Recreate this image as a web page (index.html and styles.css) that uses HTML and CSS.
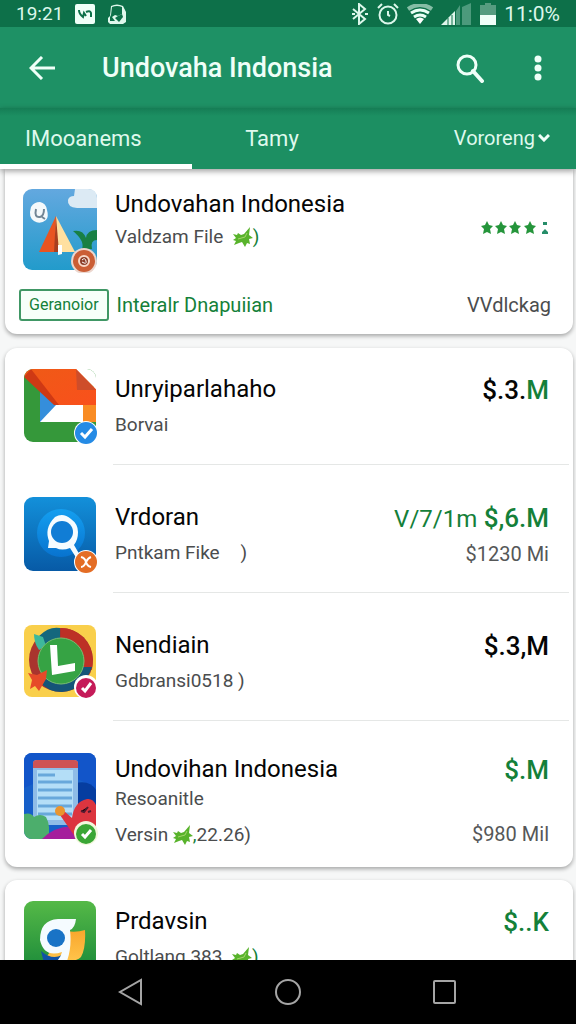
FILE: index.html
```html
<!DOCTYPE html>
<html lang="id">
<head>
<meta charset="utf-8">
<meta name="viewport" content="width=device-width, initial-scale=1">
<title>Undovaha Indonsia</title>
<link rel="stylesheet" href="styles.css">
</head>
<body>
<svg class="defs" aria-hidden="true">
  <defs>
    <linearGradient id="sky" x2="0" y2="1"><stop stop-color="#63a8df"/><stop offset="1" stop-color="#229bcb"/></linearGradient>
    <linearGradient id="blue" x2="0" y2="1"><stop stop-color="#1390da"/><stop offset="1" stop-color="#075aa6"/></linearGradient>
    <linearGradient id="disc" x2="0" y2="1"><stop stop-color="#149ff0"/><stop offset="1" stop-color="#0873cf"/></linearGradient>
    <linearGradient id="green" x2="0" y2="1"><stop stop-color="#55b947"/><stop offset="1" stop-color="#178739"/></linearGradient>
    <linearGradient id="orange" x2="0" y2="1"><stop stop-color="#f9a62c"/><stop offset="1" stop-color="#ffc54c"/></linearGradient>
    <linearGradient id="flame" x2="1" y2="1"><stop stop-color="#ef5a16"/><stop offset="1" stop-color="#f9501c"/></linearGradient>
    <clipPath id="tile"><rect width="72" height="73" rx="9"/></clipPath>
    <clipPath id="tall"><rect width="72" height="86" rx="8"/></clipPath>
    <symbol id="leaf" viewBox="0 0 20 20"><path fill="#58b32b" d="M0 7l4 1 1-2 3 2 3-1 6-7-1 8 4 3-4 1 1 5-3-1-2 4-3-5-3 1-5 2 2-4-3-1 3-2z"/><path d="M5 12l7-2 2-4" fill="none" stroke="#a5d66b"/></symbol>
  </defs>
</svg>

<div class="status">
  <span class="clock">19:21</span>
  <svg class="note" width="20" height="20" viewBox="0 0 20 20"><rect width="20" height="20" rx="2" fill="#effff8"/><path d="M4 6q0 4 4 7l1-4 2 3M11 8q4-2 5 1v4" fill="none" stroke="#0d7049" stroke-width="2"/></svg>
  <svg class="note" width="20" height="20" viewBox="0 0 20 20"><path d="M4 2Q10-1 16 2L19 8V18L16 20H3L1 18V14L3 12z" fill="#dff8ec"/><path d="M5 3Q10 1 15 3V10L11 12 8 11 5 13 8 17 3 17 3 13 4 11z" fill="#0d7049"/><path d="M11 12l4-2 1 3-4 5-4-4z" fill="#0d7049"/></svg>
  <span class="spacer"></span>
  <svg width="18" height="22" viewBox="0 0 18 22"><path d="M2 6l12 10-6 5V1l6 5L2 16M1 11h3M14 11h3" fill="none" stroke="#dcf7eb" stroke-width="2"/></svg>
  <svg width="22" height="22" viewBox="0 0 22 22" fill="none" stroke="#dcf7eb" stroke-width="2"><circle cx="11" cy="12" r="8.500"/><path d="M11 8v4l2 1M1 5l4-4M17 1l4 4"/></svg>
  <svg width="26" height="20" viewBox="0 0 26 20" fill="none" stroke="#e9fff5"><path d="M1 5q12-8 24 0" stroke="#85bda5" stroke-width="4"/><path d="M4 9q9-6 18 0M7 13q6-4 12 0" stroke-width="3"/><path d="M9 15q4-3 8 0l-4 5z" fill="#fff" stroke="none"/></svg>
  <svg width="31" height="22" viewBox="0 0 31 22"><path d="M0 22L14 8V22z" fill="#dff5eb"/><path d="M15 8l4-6v20h-4zM21 4l9-4v22h-9z" fill="#4c9a7c"/><path d="M7 15v7M11 12v10" stroke="#0d7049"/></svg>
  <svg width="16" height="22" viewBox="0 0 16 22"><path d="M0 2h5V0h6v2h5v10H0z" fill="#569c80"/><path d="M0 12h16v10H0z" fill="#effff8"/></svg>
  <span class="charge">11:0%</span>
</div>

<header class="appbar">
  <button class="iconbtn" aria-label="Back"><svg width="27" height="24" viewBox="0 0 27 24" fill="none" stroke="#effff8" stroke-width="3"><path d="M26 12H3M13 1L2 12l11 11"/></svg></button>
  <h1>Undovaha Indonsia</h1>
  <button class="iconbtn search" aria-label="Search"><svg width="30" height="30" viewBox="0 0 30 30" fill="none" stroke="#effff8"><circle cx="12" cy="12" r="9" stroke-width="3"/><path d="M18 18l9 10" stroke-width="4" stroke-linecap="round"/></svg></button>
  <button class="iconbtn" aria-label="More"><svg width="8" height="26" viewBox="0 0 8 26" fill="#effff8"><circle cx="4" cy="4" r="3.500"/><circle cx="4" cy="13" r="3.500"/><circle cx="4" cy="22" r="3.500"/></svg></button>
</header>

<nav class="tabs">
  <button class="tab first active">IMooanems</button>
  <button class="tab">Tamy</button>
  <button class="tab last">Vororeng<svg width="12" height="8" viewBox="0 0 12 8" fill="none" stroke="#effff8" stroke-width="3"><path d="M1 1l5 5 5-5"/></svg></button>
</nav>

<main class="list">
  <section class="card featured">
    <div class="row">
      <svg class="icon" width="74" height="84" viewBox="0 0 74 84">
        <rect width="74" height="81" rx="9" fill="url(#sky)"/>
        <path d="M52 0h13q9 0 9 9v10H54q-10-1-9-8 1-4 6-4z" fill="#dceaf4"/>
        <path d="M8 18q3-5 9-5 6 1 7 8 2 7-1 10-6 5-12 1-6-4-3-14z" fill="#f4f9fb"/><path d="M13 20q-2 9 4 8 4-1 4-8M19 28l3 2" fill="none" stroke="#728695" stroke-width="2"/>
        <path d="M33 27L16 63h20z" fill="#e85421"/><path d="M33 27l-1 36h20z" fill="#ffe0a0"/><path d="M33 27l3 36h-5z" fill="#a83f20"/><path d="M35 56h4v9l-4 1z" fill="#fff"/>
        <path d="M59 60q3-8-9-18 10-2 13 7 1-8 11-8v10q-7 0-5 9z" fill="#188044"/>
        <circle cx="61" cy="72" r="13" fill="#ecd7cf"/><circle cx="61" cy="72" r="11" fill="#cb5e35"/><circle cx="61" cy="72" r="5" fill="#8c3e28" stroke="#f8d8c8" stroke-width="2"/><path d="M59 71q3-3 4 1t-4 1" fill="none" stroke="#fff"/>
      </svg>
      <div class="text"><h2>Undovahan Indonesia</h2><p>Valdzam File  <svg class="leaf"><use href="#leaf"/></svg><span class="green">)</span></p></div>
      <svg class="stars" width="68" height="14" viewBox="0 0 68 14" role="img" aria-label="4 stars"><g fill="#25953b"><path id="star" d="M6 0l2 4 4 1-3 3 1 5-4-2-4 2 1-5-3-3 4-1z"/><use href="#star" x="14"/><use href="#star" x="28"/><use href="#star" x="43"/><path d="M62 1h4v3h-4zM61 13v-2l3-3 3 3v2z" fill="#268d69"/></g></svg>
    </div>
    <div class="actions"><button class="chip">Geranoior</button><a class="green" href="#">Interalr Dnapuiian</a><span class="side">VVdlckag</span></div>
  </section>

  <section class="card">
    <article class="row">
      <svg class="icon" width="74" height="77" viewBox="0 0 74 77">
        <g clip-path="url(#tile)"><path d="M0 0h72v73H0z" fill="#35983a"/><path d="M16 18h56v35H16z" fill="#fff"/><path d="M16 20l16 16-16 17z" fill="#358edb"/><path d="M3 0h50l19 20v16H31L0 6z" fill="url(#flame)"/><path d="M0 8L7 0l28 36h-5z" fill="#cf3914"/><path d="M59 36h13v17H59z" fill="#f98c24"/><path d="M52 0h20v20z" fill="#fff"/><path d="M52 0l20 21H53z" fill="#ce4d2a"/></g>
        <circle cx="62" cy="64" r="12" fill="#fff"/><circle cx="62" cy="64" r="11" fill="#258be5"/><path d="M57 64l4 4 7-8" fill="none" stroke="#fff" stroke-width="3"/>
      </svg>
      <div class="text"><h2>Unryiparlahaho</h2><p>Borvai</p></div>
      <div class="price"><strong class="dark">$.3.<span class="green">M</span></strong></div>
    </article>
    <article class="row">
      <svg class="icon" width="74" height="77" viewBox="0 0 74 77">
        <rect width="72" height="74" rx="9" fill="url(#blue)"/><circle cx="37" cy="36" r="24" fill="url(#disc)"/><path d="M31 20q8-5 16 2 7 5 7 13 0 8-4 13l7 12-4 2-7-11q-8 3-14 0l-8 0 1-7q-5-13 6-24z" fill="#f6fcff"/><circle cx="38" cy="35" r="11" fill="#117dd5"/>
        <circle cx="62" cy="65" r="12" fill="#fff"/><circle cx="62" cy="65" r="11" fill="#e46d25"/><path d="M57 60q4 1 5 5 1 4 5 5M67 60q-3 1-5 5-2 5-5 5" fill="none" stroke="#fff" stroke-width="2"/>
      </svg>
      <div class="text"><h2>Vrdoran</h2><p>Pntkam Fike <span class="paren">)</span></p></div>
      <div class="price"><strong><span class="light">V/7/1m</span> $,6.M</strong><span>$1230 Mi</span></div>
    </article>
    <article class="row">
      <svg class="icon" width="74" height="77" viewBox="0 0 74 77">
        <rect width="72" height="72" rx="8" fill="#f9cf4b"/><circle cx="37" cy="35" r="32" fill="#a9342e"/><path d="M15 11Q25 1 36 3v11Q27 14 20 21z" fill="#14677d"/><path d="M37 3q20 1 29 19 4 10 2 23l-11-3q3-15-6-22-6-6-14-6z" fill="#bd3026"/><path d="M68 42q-8 23-30 25-14 0-22-10l9-8q16 14 31-7z" fill="#155478"/><path d="M10 9l9 3 3 9-7 4q-5-7-5-16z" fill="#3eb89c"/><circle cx="37" cy="36" r="23" fill="#36a344" stroke="#78bd70"/><path d="M26 20h7l1 21 17-3v8l-23 4z" fill="#fff"/><path d="M4 48l9 2 10-5-1 9-7 12-4-5-5 3 2-9z" fill="#e64b29"/>
        <circle cx="62" cy="62" r="12" fill="#fff"/><circle cx="62" cy="63" r="10" fill="#c51b59"/><path d="M58 63l3 3 6-8" fill="none" stroke="#fff" stroke-width="3"/>
      </svg>
      <div class="text"><h2>Nendiain</h2><p>Gdbransi0518 )</p></div>
      <div class="price"><strong class="dark">$.3,M</strong></div>
    </article>
    <article class="row">
      <svg class="icon" width="74" height="93" viewBox="0 0 74 93">
        <g clip-path="url(#tall)"><path d="M0 0h72v86H0z" fill="#165fc9"/><path d="M0 35Q45 12 72 37V0H0z" fill="#1255c9"/><path d="M52 30q14-3 20 7v25H50z" fill="#063da0"/><rect x="9" y="7" width="45" height="65" rx="4" fill="#8fbce7"/><path d="M9 15v-5q0-3 4-3h37q4 0 4 3v5z" fill="#ce5254"/><rect x="13" y="17" width="36" height="50" fill="#b4def7"/><path d="M14 22h17M14 29h34M14 37h34M14 45h34M14 53h34M14 61h34" stroke="#68a8db" stroke-width="3"/><path d="M0 61q7-2 10 3 6-4 12 0 5 9 2 22H0z" fill="#4cae6c"/><path d="M18 86q15-15 36-12v12z" fill="#a51e9c"/><path d="M48 65q2-16 15-19 6-1 9 6v36H54L36 62l4-4z" fill="#dc353f"/><circle cx="36" cy="58" r="5" fill="#e9952f"/><path d="M57 58l3 1 4-5M64 59l3-1" stroke="#541b30" stroke-width="2"/></g>
        <circle cx="62" cy="80" r="12" fill="#f2f7dc"/><circle cx="62" cy="81" r="10" fill="#3aa635"/><path d="M58 81l3 3 6-7" fill="none" stroke="#fff" stroke-width="3"/>
      </svg>
      <div class="text tight"><h2>Undovihan Indonesia</h2><p>Resoanitle</p><p class="more">Versin <svg class="leaf"><use href="#leaf"/></svg><span class="green">,</span>22.26)</p></div>
      <div class="price spread"><strong>$.M</strong><span>$980 Mil</span></div>
    </article>
  </section>

  <section class="card">
    <article class="row">
      <svg class="icon" width="74" height="77" viewBox="0 0 74 77">
        <rect width="72" height="74" rx="9" fill="url(#green)"/><path d="M42 30q10 2 19-1 1 18-4 27-4 4-15 5-10 0-19-6z" fill="url(#orange)"/><path d="M17 50q15 13 28-2l-3 14H20z" fill="#1052a5"/><path d="M52 18q-1 9-6 11 2 17-3 31H33q4-4 5-9-18 6-22-12Q16 19 34 18z" fill="#f5fbff"/><circle cx="32" cy="37" r="9" fill="#1973c6"/>
      </svg>
      <div class="text"><h2>Prdavsin</h2><p>Goltlang 383  <svg class="leaf"><use href="#leaf"/></svg><span class="green">)</span></p></div>
      <div class="price"><strong>$..K</strong></div>
    </article>
  </section>
</main>

<footer class="sysnav">
  <button aria-label="Back"><svg width="26" height="28" viewBox="0 0 26 28"><path d="M23 2v24L2 14z"/></svg></button>
  <button aria-label="Home"><svg width="28" height="28" viewBox="0 0 28 28"><circle cx="14" cy="14" r="12"/></svg></button>
  <button aria-label="Recent"><svg width="26" height="26" viewBox="0 0 26 26"><rect x="2" y="2" width="21" height="22" rx="1"/></svg></button>
</footer>
</body>
</html>
```
FILE: styles.css
```css
* { box-sizing: border-box; }
body {
  margin: 0;
  height: 100vh;
  display: flex;
  flex-direction: column;
  overflow: hidden;
  background: #f6f7f7;
  color: #050505;
  font-family: Roboto, "Liberation Sans", sans-serif;
}
h1, h2, p { margin: 0; font-weight: 400; }
button { border: 0; padding: 0; background: none; color: inherit; font: inherit; }
a { text-decoration: none; }
svg { display: block; flex: none; }
.defs { position: absolute; width: 0; height: 0; }

.status {
  flex: none;
  display: flex;
  align-items: center;
  gap: 8px;
  height: 27px;
  padding: 0 16px;
  background: #0d7049;
  color: #dcf7eb;
  font-size: 21px;
  line-height: 24px;
}
.clock { font-size: 19px; }
.note { margin-left: 4px; }
.spacer { flex: 1; }

.appbar {
  flex: none;
  display: flex;
  align-items: center;
  height: 81px;
  padding: 0 14px 0 18px;
  background: #1e9165;
  color: #effff8;
}
.appbar h1 { flex: 1; padding-left: 36px; font-size: 27px; font-weight: 500; line-height: 32px; }
.iconbtn { display: grid; place-items: center; width: 48px; height: 48px; flex: none; }
.search { margin-right: 20px; }

.tabs {
  flex: none;
  display: grid;
  grid-template-columns: 6fr 5fr 7fr;
  height: 61px;
  background: linear-gradient(#157d55, #1c8f62 8px);
  color: #dff9ed;
  font-size: 22px;
  position: relative;
  box-shadow: 0 2px 6px #0006;
}
.tab { display: flex; align-items: center; justify-content: center; border-bottom: 5px solid transparent; padding-top: 4px; }
.first { justify-content: flex-start; padding-left: 25px; }
.last { justify-content: flex-end; padding-right: 26px; gap: 3px; font-size: 20px; }
.active { border-bottom-color: #fff; }

.list { flex: 1; min-height: 0; overflow: hidden; padding: 0 3px 0 5px; }
.card { margin-bottom: 13px; border-radius: 12px; background: #fff; box-shadow: 0 2px 4px #0005; }
.featured { border-radius: 0 0 12px 12px; padding-bottom: 13px; margin-bottom: 14px; }
.row { display: flex; align-items: flex-start; position: relative; padding: 33px 24px 18px 19px; }
.row:first-child { padding-top: 21px; }
.row + .row::before { content: ""; position: absolute; top: 0; left: 108px; right: 4px; height: 1px; background: #e5e7e6; }
.icon { margin-right: 17px; }
.text { flex: 1; min-width: 0; padding-top: 4px; }
h2 { font-size: 24px; line-height: 32px; white-space: nowrap; }
p { display: flex; align-items: center; margin-top: 6px; color: #4b4d4e; font-size: 19px; line-height: 28px; white-space: pre; }
.leaf { width: 20px; height: 20px; }
.paren { padding-left: 16px; }
.green { color: #148039; }
.price { display: flex; flex-direction: column; align-items: flex-end; gap: 5px; padding-top: 5px; color: #148039; }
.price strong { font-size: 26px; line-height: 32px; font-weight: 500; }
.price .light { font-size: 24px; font-weight: 400; }
.price .dark { color: #050505; }
.price > span { color: #555758; font-size: 20px; line-height: 28px; }
.tight { padding-top: 0; }
.tight p { margin-top: 0; }
.tight .more { margin-top: 8px; }
.spread { gap: 34px; padding-top: 1px; }

.featured .row { padding: 20px 24px 0 18px; }
.featured .text { padding-top: 0; }
.featured .icon { margin-right: 18px; }
.featured h2 { line-height: 30px; }
.featured p { margin-top: 4px; }
.stars { margin-top: 32px; }
.actions { display: flex; align-items: center; gap: 8px; margin-top: 16px; padding: 0 22px 0 14px; font-size: 20px; line-height: 28px; }
.chip { height: 32px; padding: 0 8px; border: 2px solid #409765; border-radius: 3px; background: #f7fffa; color: #148039; font-size: 16px; }
.side { margin-left: auto; color: #4b4d4e; }

.sysnav { flex: none; display: grid; grid-template-columns: repeat(3, 1fr); height: 64px; padding: 0 52px; background: #000; }
.sysnav button { display: grid; place-items: center; }
.sysnav svg { fill: none; stroke: #a5a5a5; stroke-width: 2; }
```
